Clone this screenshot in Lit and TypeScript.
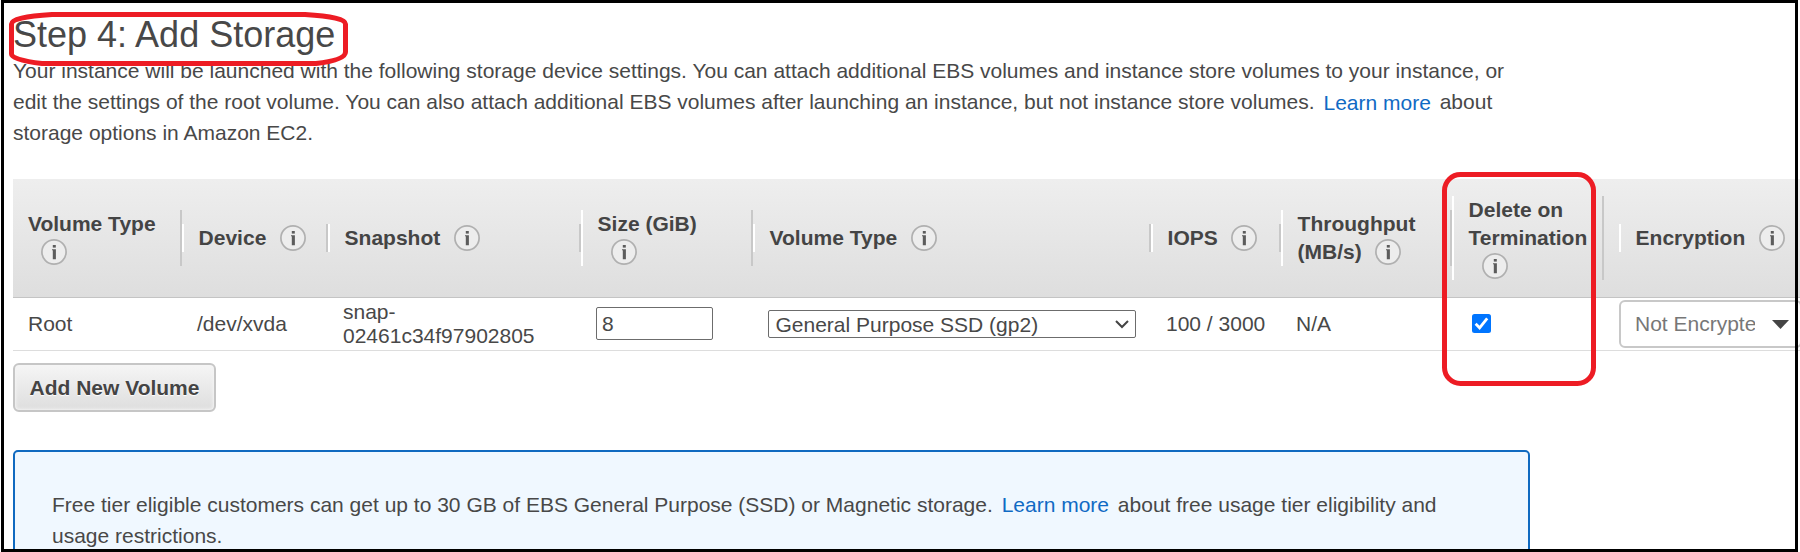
import { LitElement, html, css } from "lit";
import { customElement } from "lit/decorators.js";

@customElement("info-icon")
class InfoIcon extends LitElement {
  static styles = css`
    :host { display: inline-block; width: 26px; height: 26px; margin-left: 13.4px; vertical-align: -6px; line-height: 0; }
    svg { display: block; }
  `;
  render() {
    return html`<svg width="26" height="26" viewBox="0 0 26 26">
      <circle cx="13" cy="13" r="12.1" fill="#ededed" stroke="#b0b0b0" stroke-width="1.7" />
      <rect x="11.8" y="6" width="3" height="2.6" fill="#5c5c5c" />
      <path d="M11 10.300h3.900v10h-3.100v-9h-.8z" fill="#5c5c5c" />
    </svg>`;
  }
}

@customElement("app-root")
class AppRoot extends LitElement {
  static styles = css`
    :host {
      display: block; position: relative; box-sizing: border-box; width: 1800px; height: 552px; overflow: hidden;
      background: #fff; color: #484848; font: 21px/31px "Liberation Sans", Arial, sans-serif;
    }
    .page { display: flex; flex-direction: column; align-items: flex-start; padding: 15px 0 0 13px; }
    h1 { margin: 0; font-size: 36px; line-height: 40px; font-weight: 400; }
    .intro { margin: 0; white-space: nowrap; }
    a { color: #106ac4; text-decoration: none; margin: 0 3px; }
    .intro a { position: relative; top: 1px; }
    .table { margin-top: 31px; width: 1787px; overflow: hidden; }
    .row { display: grid; grid-template-columns: 169px 146px 253px 172px 398px 130px 171px 152px 15px 200px; align-items: center; }
    .head { height: 118px; border-bottom: 1px solid #c4c4c4; background: linear-gradient(#eee, #dedede); font-weight: 700; line-height: 28px; color: #444; }
    .th { display: flex; align-items: stretch; white-space: nowrap; }
    .label { flex: 1; border-left: 2px solid #fff; padding-left: 14.6px; }
    .first .label { border-left-color: transparent; padding-left: 13px; }
    .tick { width: 2px; background: #c8c8c8; }
    .body { height: 52px; border-bottom: 1px solid #ddd; line-height: 24px; }
    .td { padding-left: 15px; white-space: nowrap; }
    .size { box-sizing: border-box; width: 117px; height: 33px; margin-bottom: 1px; border: 1px solid #6c6c6c; border-radius: 2px; padding-left: 5px; line-height: 31px; }
    .select { box-sizing: border-box; width: 368px; height: 28px; border: 1px solid #6c6c6c; border-radius: 2px; padding: 1px 6px 0 6.5px; display: flex; align-items: center; justify-content: space-between; line-height: 26px; }
    .check { display: block; margin: 0 0 1px 5px; }
    .combo { box-sizing: border-box; width: 183px; height: 48px; border: 2px solid #c8c8c8; border-radius: 6px; display: flex; align-items: center; padding-left: 14px; color: #777; }
    .combo span { flex: none; width: 120px; overflow: hidden; white-space: nowrap; }
    .combo svg { flex: none; margin-left: 17px; }
    .add { box-sizing: border-box; margin-top: 12px; width: 203px; height: 49px; border: 2px solid #c6c6c6; border-radius: 6px; background: linear-gradient(#f5f5f5, #dedede); box-shadow: inset 0 0 3px 1px #f4f4f4; text-align: center; font-weight: 700; line-height: 45px; text-shadow: 0 1px 1px #fff; white-space: nowrap; color: #444; }
    .notice { box-sizing: border-box; margin-top: 38px; width: 1517px; height: 130px; border: 2px solid #106ac0; border-radius: 5px; background: #f0f8ff; padding: 37px 0 0 37px; white-space: nowrap; }
    .frame { position: absolute; inset: 0 2px 0 1px; border: 3px solid #000; }
    .marks { position: absolute; left: 0; top: 0; }
  `;
  private th(content: unknown, first = false) {
    return html`<div class="th ${first ? "first" : ""}"><div class="label">${content}<info-icon></info-icon></div><div class="tick"></div></div>`;
  }
  render() {
    return html`
      <div class="page">
        <h1>Step 4: Add Storage</h1>
        <p class="intro">Your instance will be launched with the following storage device settings. You can attach additional EBS volumes and instance store volumes to your instance, or<br />edit the settings of the root volume. You can also attach additional EBS volumes after launching an instance, but not instance store volumes. <a>Learn more</a> about<br />storage options in Amazon EC2.</p>
        <div class="table">
          <div class="row head">
            ${this.th(html`Volume Type<br />`, true)}
            ${this.th("Device")}
            ${this.th("Snapshot")}
            ${this.th(html`Size (GiB)<br />`)}
            ${this.th("Volume Type")}
            ${this.th("IOPS")}
            ${this.th(html`Throughput<br />(MB/s)`)}
            ${this.th(html`Delete on<br />Termination<br />`)}
            <div></div>
            ${this.th("Encryption")}
          </div>
          <div class="row body">
            <div class="td">Root</div>
            <div class="td">/dev/xvda</div>
            <div class="td">snap-<br />02461c34f97902805</div>
            <div class="td"><div class="size">8</div></div>
            <div class="td"><div class="select">General Purpose SSD (gp2)
              <svg width="14" height="9" viewBox="0 0 14 9"><path d="M1 1l6 6 6-6" fill="none" stroke="#444" stroke-width="2" /></svg></div></div>
            <div class="td">100 / 3000</div>
            <div class="td">N/A</div>
            <div class="td"><svg class="check" width="19" height="19" viewBox="0 0 19 19"><rect width="19" height="19" rx="2.5" fill="#0075ff" /><path d="M3.6 9.8l4 4L15.2 4.4" fill="none" stroke="#fff" stroke-width="2.8" /></svg></div>
            <div></div>
            <div class="combo"><span>Not Encrypted</span><svg width="17" height="9" viewBox="0 0 17 9"><path d="M0 0h17L8.5 9z" fill="#444" /></svg></div>
          </div>
        </div>
        <div class="add">Add New Volume</div>
        <div class="notice">Free tier eligible customers can get up to 30 GB of EBS General Purpose (SSD) or Magnetic storage. <a>Learn more</a> about free usage tier eligibility and<br />usage restrictions.</div>
      </div>
      <svg class="marks" width="1800" height="552" fill="none" stroke="#ed1c24" stroke-width="5">
        <path d="M52 14.5H305Q345.500 17 345.500 24V52Q345.500 60 316 63.500H42Q11.500 60 11.500 54V24Q11.500 17 52 14.500Z" />
        <rect x="1444.500" y="174.500" width="149" height="209" rx="16" />
      </svg>
      <div class="frame"></div>
    `;
  }
}
